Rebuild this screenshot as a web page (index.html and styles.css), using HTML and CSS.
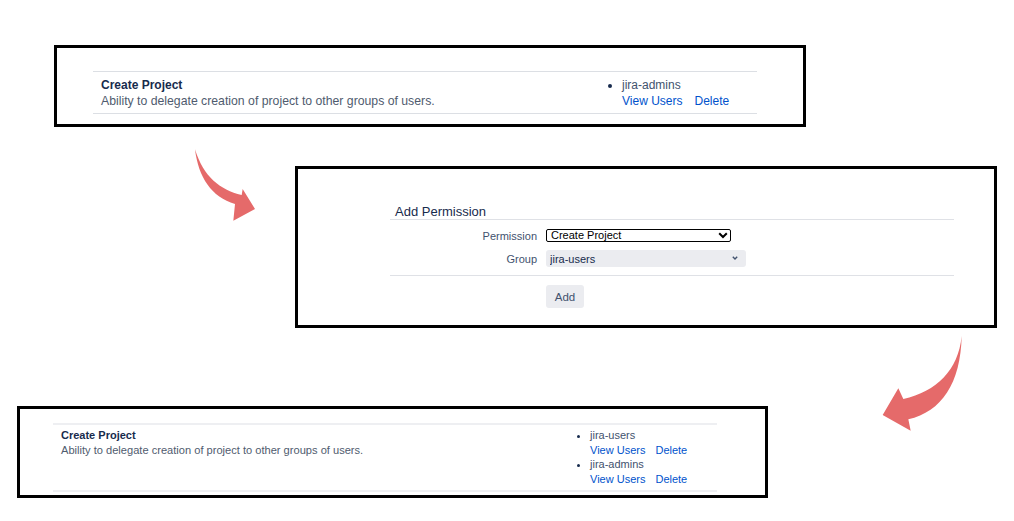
FILE: index.html
```html
<!DOCTYPE html>
<html lang="en">
<head>
    <meta charset="UTF-8">
    <meta name="viewport" content="width=device-width, initial-scale=1.0">
    <title>Add Permission - Global Permissions</title>
    <link rel="stylesheet" href="styles.css">
</head>
<body>
    <div class="canvas">

        <!-- Before: only jira-admins can create projects -->
        <section class="shot shot-before">
            <div class="perm-table">
                <div class="perm-row">
                    <div class="perm-info">
                        <div class="perm-name">Create Project</div>
                        <div class="perm-desc">Ability to delegate creation of project to other groups of users.</div>
                    </div>
                    <ul class="perm-groups">
                        <li>jira-admins
                            <div class="perm-links"><a href="#">View Users</a><a href="#">Delete</a></div>
                        </li>
                    </ul>
                </div>
            </div>
        </section>

        <!-- Add Permission form -->
        <section class="shot shot-form">
            <h3 class="form-title">Add Permission</h3>
            <div class="form-fields">
                <label class="form-label" for="permission">Permission</label>
                <div class="select-wrap">
                    <select id="permission" class="select-plain">
                        <option>Create Project</option>
                    </select>
                    <svg class="chevron chevron-bold" width="10" height="7" viewBox="0 0 10 7">
                        <path d="M1.2 1.2 L5 5 L8.8 1.2" fill="none" stroke="#000" stroke-width="2"/>
                    </svg>
                </div>
                <label class="form-label" for="group">Group</label>
                <div class="select-wrap">
                    <select id="group" class="select-soft">
                        <option>jira-users</option>
                    </select>
                    <svg class="chevron chevron-small" width="6" height="4" viewBox="0 0 6 4">
                        <path d="M0.8 0.8 L3 3 L5.2 0.8" fill="none" stroke="#42526e" stroke-width="1.4"/>
                    </svg>
                </div>
            </div>
            <div class="form-divider"></div>
            <button class="btn-add" type="button">Add</button>
        </section>

        <!-- After: jira-users added -->
        <section class="shot shot-after">
            <div class="perm-table perm-table-small">
                <div class="perm-row">
                    <div class="perm-info">
                        <div class="perm-name">Create Project</div>
                        <div class="perm-desc">Ability to delegate creation of project to other groups of users.</div>
                    </div>
                    <ul class="perm-groups">
                        <li>jira-users
                            <div class="perm-links"><a href="#">View Users</a><a href="#">Delete</a></div>
                        </li>
                        <li>jira-admins
                            <div class="perm-links"><a href="#">View Users</a><a href="#">Delete</a></div>
                        </li>
                    </ul>
                </div>
            </div>
        </section>

        <svg class="arrow arrow-one" width="90" height="90" viewBox="0 0 270 270">
            <path d="M45 28 C70 110 120 150 185 165 L188 147 L225 207 L160 242 L165 192 C95 172 55 112 45 28 Z" fill="#e56a6a"/>
        </svg>
        <svg class="arrow arrow-two" width="110" height="110" viewBox="0 0 330 330">
            <path d="M275 18 C265 120 200 185 100 207 L85 175 L38 255 L122 302 L115 268 C215 245 272 160 275 18 Z" fill="#e56a6a"/>
        </svg>
    </div>
</body>
</html>
```

FILE: styles.css
```css
body { margin: 0; background: #fff; font-family: "Liberation Sans", Arial, sans-serif; color: #172b4d; }
.canvas { position: relative; height: 521px; padding-top: 45px; box-sizing: border-box; }

/* screenshot frames */
.shot { border: 3px solid #000; box-sizing: border-box; background: #fff; }
.shot-before { margin-left: 54px; width: 752px; height: 82px; padding: 23px 0 0 36px; }
.shot-form { margin: 39px 0 0 295px; width: 702px; height: 162px; padding: 35px 0 0 92px; }
.shot-after { margin: 78px 0 0 17px; width: 751px; height: 92px; padding: 14px 0 0 33px; }

/* permission table */
.perm-table { width: 664px; font-size: 12px; line-height: 16px; }
.perm-row {
    display: grid;
    grid-template-columns: 1fr 155px;
    border-top: 1px solid #dcdfe4;
    border-bottom: 1px solid #dcdfe4;
    padding: 5px 0 4px;
}
.perm-info { padding-left: 8px; }
.perm-name { font-weight: bold; color: #172b4d; }
.perm-desc { color: #4f5b6e; font-size: 12.25px; }
.perm-groups { margin: 0; padding-left: 20px; list-style: disc; color: #42526e; }
.perm-groups li::marker { color: #172b4d; }
.perm-links a { color: #0052cc; text-decoration: none; margin-right: 12px; }
.perm-links a:last-child { margin-right: 0; }

.perm-table-small { font-size: 11px; line-height: 14.5px; }
.perm-table-small .perm-desc { font-size: 11.1px; }
.perm-table-small .perm-row {
    grid-template-columns: 1fr 147px;
    border-top: 2px solid #eeeff2;
    border-bottom: 2px solid #eeeff2;
    padding: 3px 0 4px;
}
.perm-table-small .perm-links a { margin-right: 10px; }

/* add permission form */
.form-title {
    width: 559px;
    margin: 0;
    padding-left: 5px;
    font-size: 13px;
    font-weight: normal;
    line-height: 15px;
    color: #172b4d;
    border-bottom: 1px solid #dfe1e6;
}
.form-fields {
    display: grid;
    grid-template-columns: 147px auto;
    column-gap: 9px;
    row-gap: 8px;
    align-items: center;
    justify-items: start;
    margin-top: 9px;
}
.form-label { justify-self: end; font-size: 11px; color: #42526e; }
.select-wrap { position: relative; display: flex; }
.select-wrap select {
    appearance: none;
    -webkit-appearance: none;
    font-family: "Liberation Sans", Arial, sans-serif;
    font-size: 11px;
    margin: 0;
    outline: none;
}
.select-plain {
    width: 185px;
    height: 13px;
    padding: 0 0 0 4px;
    line-height: 11px;
    border: 1px solid #000;
    border-radius: 2px;
    background: #fff;
    color: #000;
}
.select-soft {
    width: 200px;
    height: 17px;
    padding: 0 0 0 4px;
    border: 0;
    border-radius: 3px;
    background: #ebecf0;
    color: #172b4d;
}
.chevron { position: absolute; pointer-events: none; }
.chevron-bold { right: 3px; top: 3px; }
.chevron-small { right: 8px; top: 6px; }

.form-divider { width: 564px; border-top: 1px solid #dfe1e6; margin-top: 8px; }
.btn-add {
    display: block;
    margin: 9px 0 0 156px;
    width: 38px;
    height: 23px;
    padding: 0;
    border: 0;
    border-radius: 3px;
    background: #ebecf0;
    color: #42526e;
    font-family: "Liberation Sans", Arial, sans-serif;
    font-size: 11.5px;
}

/* arrows between frames */
.arrow { position: absolute; }
.arrow-one { left: 180px; top: 140px; }
.arrow-two { left: 870px; top: 330px; }
```
